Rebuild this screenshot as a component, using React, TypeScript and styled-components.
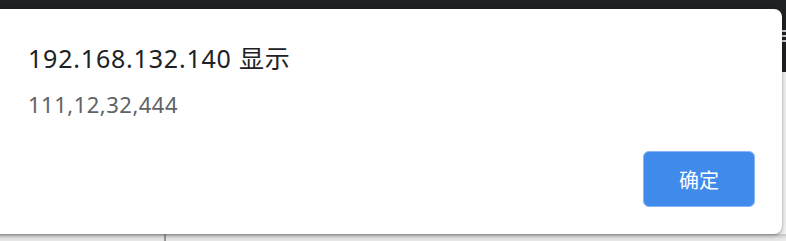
import styled, { createGlobalStyle } from "styled-components";

const GlobalStyle = createGlobalStyle`
  html, body {
    margin: 0;
    padding: 0;
  }
  body {
    width: 786px;
    height: 241px;
    overflow: hidden;
    font-family: "Noto Sans", "Noto Sans CJK SC", sans-serif;
  }
`;

const Page = styled.div`
  position: relative;
  width: 786px;
  height: 241px;
  display: grid;
  grid-template-rows: 72px 1fr;
  background: #f4f4f4;
`;

const Header = styled.div`
  background: #202124;
  display: flex;
  justify-content: flex-end;
  align-items: flex-start;
  padding-top: 30px;
`;

const MenuGlyph = styled.div`
  width: 6px;
  height: 14px;
  background: repeating-linear-gradient(#c9cdd3 0 2px, transparent 2px 5px);
`;

const Body = styled.div`
  display: flex;
  flex-direction: column;
  justify-content: flex-end;
`;

const BottomStrip = styled.div`
  height: 7px;
  background: linear-gradient(#c8c8c8, #e6e6e6 60%, #ececec);
  display: flex;
  padding-left: 164px;
`;

const Divider = styled.div`
  width: 2px;
  background: #9a9a9a;
`;

const Dialog = styled.div`
  position: absolute;
  top: 9px;
  left: -12px;
  width: 794px;
  height: 225px;
  box-sizing: border-box;
  background: #fff;
  border-radius: 8px;
  box-shadow: 0 1px 3px rgba(0, 0, 0, 0.3), 0 2px 8px rgba(0, 0, 0, 0.15);
  padding: 33px 27px 27px 40px;
  display: flex;
  flex-direction: column;
`;

const Title = styled.div`
  font-size: 25px;
  line-height: 32px;
  letter-spacing: 0.8px;
  color: #202124;
`;

const Message = styled.div`
  margin-top: 17px;
  font-size: 22px;
  line-height: 26px;
  letter-spacing: 0.5px;
  color: #5f6368;
`;

const Actions = styled.div`
  margin-top: auto;
  display: flex;
  justify-content: flex-end;
`;

const Button = styled.button`
  width: 112px;
  height: 56px;
  border-radius: 6px;
  border: 1px solid #8ab4f8;
  background: #3f8aeb;
  color: #fff;
  font-family: "Noto Sans CJK SC", sans-serif;
  font-size: 20px;
  cursor: pointer;
`;

const App = () => {
  return (
    <>
      <GlobalStyle />
      <Page>
        <Header>
          <MenuGlyph />
        </Header>
        <Body>
          <BottomStrip>
            <Divider />
          </BottomStrip>
        </Body>
        <Dialog>
          <Title>192.168.132.140 显示</Title>
          <Message>111,12,32,444</Message>
          <Actions>
            <Button>确定</Button>
          </Actions>
        </Dialog>
      </Page>
    </>
  );
};

export default App;
